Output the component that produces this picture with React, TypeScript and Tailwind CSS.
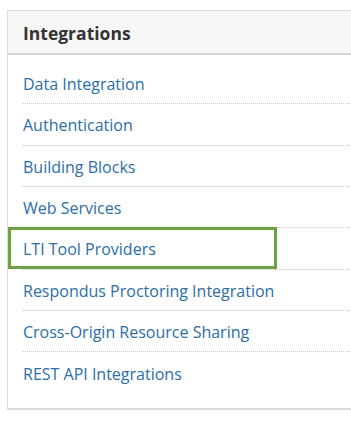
import React from 'react';

const ITEMS = [
  'Data Integration',
  'Authentication',
  'Building Blocks',
  'Web Services',
  'LTI Tool Providers',
  'Respondus Proctoring Integration',
  'Cross-Origin Resource Sharing',
  'REST API Integrations',
];

const HIGHLIGHT = 'LTI Tool Providers';

export default function App() {
  return (
    <div className="min-h-[423px] w-[351px] overflow-hidden bg-white pl-[7px] pt-[10px] font-['Open_Sans',sans-serif]">
      <div className="w-[360px] border-b-2 border-l border-t border-[#dcdcdc] bg-white">
        {/* Header */}
        <div className="flex h-[44px] items-center border-b-2 border-[#d6d6d6] bg-[#f7f7f7] px-[15px] pt-[2px]">
          <h2 className="text-[17.5px] font-bold text-[#333]">Integrations</h2>
        </div>

        {/* Links */}
        <ul className="pb-[14px] pt-[8px]">
          {ITEMS.map((item, i) => (
            <li
              key={item}
              className={`relative mx-[15px] flex h-[41.33px] items-center pt-[2px] ${
                i < ITEMS.length - 1 ? 'border-b border-dotted border-[#c4c4c4]' : ''
              }`}
            >
              <a href="#" className="text-[16px] text-[#2c6ea6]">
                {item}
              </a>
              {item === HIGHLIGHT && (
                <span className="pointer-events-none absolute -left-[15px] -top-[1px] h-[42px] w-[269px] border-[3px] border-[#6ca340]" />
              )}
            </li>
          ))}
        </ul>
      </div>
    </div>
  );
}
